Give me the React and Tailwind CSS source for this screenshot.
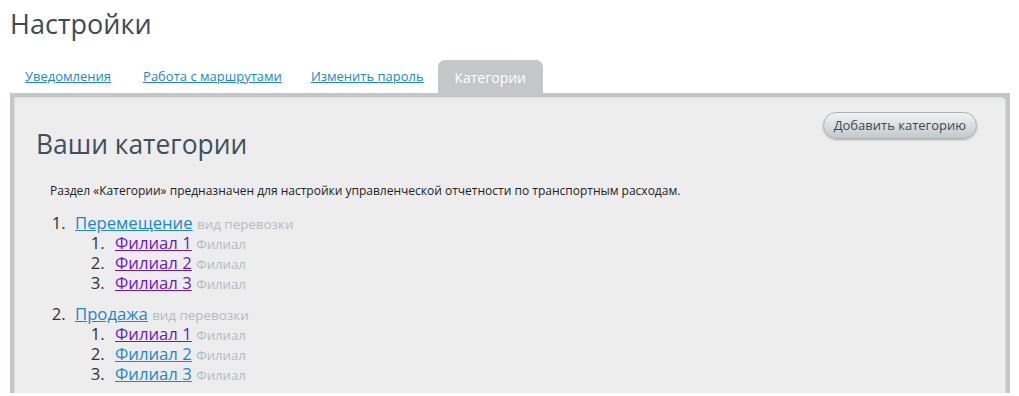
import React from "react";

const categories = [
    { name: "Перемещение", branches: [true, true, true] },
    { name: "Продажа", branches: [true, false, false] },
];

function SubList({ visited }) {
    return (
        <ol className="list-decimal pl-[34px] text-[16.7px] leading-[20px] text-[#333]">
            {visited.map((v, i) => (
                <li key={i} className="pl-[6px] h-[20px]">
                    <a href="#" className={`underline ${v ? "text-[#6a17c9]" : "text-[#1a87cf]"}`}>
                        Филиал {i + 1}
                    </a>{" "}
                    <span className="text-[13.2px] leading-none text-[#b3bcc4]">Филиал</span>
                </li>
            ))}
        </ol>
    );
}

export default function App() {
    return (
        <div className="w-[1019px] h-[396px] overflow-hidden bg-white font-['Open_Sans',sans-serif]">
            <h1 className="pl-[10px] pt-[6px] text-[27px] leading-[36px] text-[#3e4a54]">Настройки</h1>

            <div className="flex items-end pl-[25px] mt-[18px] h-[33px] text-[13px]">
                <a href="#" className="underline text-[#1a87cf] mb-[7px]">Уведомления</a>
                <a href="#" className="underline text-[#1a87cf] mb-[7px] ml-[32px]">Работа с маршрутами</a>
                <a href="#" className="underline text-[#1a87cf] mb-[7px] ml-[29px]">Изменить пароль</a>
                <div className="ml-[14px] w-[105px] h-[33px] rounded-t-[7px] bg-[#c3c7c7] text-white text-[14px] flex items-center justify-center pt-[2px]">
                    Категории
                </div>
            </div>

            <div className="ml-[10px] w-[1000px] bg-[#c3c7c7] pt-[4px] px-[4px] h-[300px]">
                <div className="h-full bg-[#ededed] rounded-tr-[5px] border border-[#d9dcdc] border-b-0 flex flex-col">
                    <div className="flex justify-between items-start">
                        <h2 className="ml-[21px] mt-[28px] text-[26.4px] leading-[36px] text-[#3e4f5e]">Ваши категории</h2>
                        <button className="mt-[14px] mr-[28px] h-[27px] px-[10px] rounded-full border border-[#a9b1b3] bg-gradient-to-b from-[#f3f5f5] to-[#c2c9cb] shadow-[0_1px_2px_rgba(0,0,0,0.25)] text-[13px] text-[#3e4a54]">
                            Добавить категорию
                        </button>
                    </div>
                    <p className="ml-[35px] mt-[20px] text-[12px] text-[#222]">
                        Раздел «Категории» предназначен для настройки управленческой отчетности по транспортным расходам.
                    </p>
                    <ol className="list-decimal ml-[35px] pl-[20px] mt-[13px] text-[16.7px] leading-[20px] text-[#333]">
                        {categories.map((c, i) => (
                            <li key={i} className="pl-[5px] mb-[11px]">
                                <div className="h-[20px]">
                                    <a href="#" className="underline text-[#1a87cf]">{c.name}</a>{" "}
                                    <span className="text-[13.4px] leading-none text-[#b3bcc4]">вид перевозки</span>
                                </div>
                                <SubList visited={c.branches} />
                            </li>
                        ))}
                    </ol>
                </div>
            </div>
        </div>
    );
}
